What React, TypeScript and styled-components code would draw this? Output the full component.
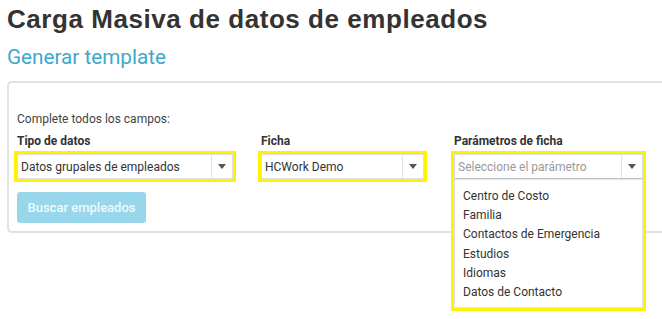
import React from "react";
import styled, { createGlobalStyle } from "styled-components";

const GlobalStyle = createGlobalStyle`
  html, body { margin: 0; padding: 0; background: #fff; }
  body { font-family: Roboto, "Noto Sans", Arial, sans-serif; color: #333; }
`;

const Page = styled.div`
  min-height: 100vh;
  box-sizing: border-box;
  padding-left: 7px;
`;

const Title = styled.h1`
  margin: 3px 0 0;
  font-family: "Liberation Sans", Arial, sans-serif;
  font-weight: 700;
  font-size: 26px;
  letter-spacing: 0.55px;
  line-height: 32px;
  color: #333;
`;

const SubTitle = styled.h2`
  margin: 10px 0 0;
  font-family: Roboto, sans-serif;
  font-weight: 400;
  font-size: 20.7px;
  line-height: 25px;
  color: #3fa7cb;
`;

const Card = styled.section`
  margin-top: 11px;
  border: 2px solid #e2e2e2;
  border-right: none;
  border-radius: 5px 0 0 5px;
  padding: 29px 0 8px 8px;
`;

const Intro = styled.p`
  margin: 0 0 8px;
  font-size: 12px;
  line-height: 14px;
  color: #444;
`;

const Row = styled.div`
  display: flex;
  align-items: flex-start;
`;

const Field = styled.div<{ $w: number; $gap: number }>`
  width: ${(p) => p.$w}px;
  margin-right: ${(p) => p.$gap}px;
  display: flex;
  flex-direction: column;
`;

const Label = styled.label`
  font-size: 12px;
  font-weight: 700;
  line-height: 14px;
  color: #333;
  margin-bottom: 3px;
`;

const Highlight = styled.div`
  position: relative;
  margin: 0 -3px;
  border: 3px solid #fff200;
  height: 25px;
`;

const Select = styled.div<{ $focused?: boolean }>`
  display: flex;
  align-items: center;
  height: 25px;
  box-sizing: border-box;
  border: 1px solid ${(p) => (p.$focused ? "#d6dde3" : "#e0e0e0")};
  border-bottom-color: ${(p) => (p.$focused ? "#b8c3cc" : "#e0e0e0")};
  background: #fff;
`;

const Value = styled.span<{ $placeholder?: boolean }>`
  flex: 1;
  padding-left: 3px;
  font-size: 12px;
  color: ${(p) => (p.$placeholder ? "#999" : "#333")};
  white-space: nowrap;
  overflow: hidden;
`;

const Caret = styled.span`
  width: 20px;
  height: 100%;
  border-left: 1px solid #e3e3e3;
  display: flex;
  align-items: center;
  justify-content: center;
  &::after {
    content: "";
    border-left: 4px solid transparent;
    border-right: 4px solid transparent;
    border-top: 5px solid #555;
  }
`;

const Menu = styled.ul`
  position: absolute;
  left: -3px;
  right: -3px;
  top: 25px;
  margin: 0;
  padding: 8px 0 6px;
  list-style: none;
  background: #fff;
  border: 3px solid #fff200;
  border-top: none;
  box-shadow: inset 0 0 0 1px #e4e4e4;
  z-index: 5;
`;

const Item = styled.li`
  padding-left: 9px;
  font-size: 12px;
  line-height: 19.2px;
  color: #333;
`;

const Button = styled.button`
  margin-top: 10px;
  width: 129px;
  height: 31px;
  border: none;
  border-radius: 3px;
  background: #98d7eb;
  color: #eef9fd;
  font-family: Roboto, sans-serif;
  font-size: 13px;
  font-weight: 500;
  padding: 0;
`;

const options = [
  "Centro de Costo",
  "Familia",
  "Contactos de Emergencia",
  "Estudios",
  "Idiomas",
  "Datos de Contacto",
];

export default function App() {
  return (
    <Page>
      <GlobalStyle />
      <Title>Carga Masiva de datos de empleados</Title>
      <SubTitle>Generar template</SubTitle>
      <Card>
        <Intro>Complete todos los campos:</Intro>
        <Row>
          <Field $w={216} $gap={28}>
            <Label>Tipo de datos</Label>
            <Highlight>
              <Select>
                <Value>Datos grupales de empleados</Value>
                <Caret />
              </Select>
            </Highlight>
          </Field>
          <Field $w={163} $gap={30}>
            <Label>Ficha</Label>
            <Highlight>
              <Select>
                <Value>HCWork Demo</Value>
                <Caret />
              </Select>
            </Highlight>
          </Field>
          <Field $w={189} $gap={0}>
            <Label>Parámetros de ficha</Label>
            <Highlight>
              <Select $focused>
                <Value $placeholder>Seleccione el parámetro</Value>
                <Caret />
              </Select>
              <Menu>
                {options.map((o) => (
                  <Item key={o}>{o}</Item>
                ))}
              </Menu>
            </Highlight>
          </Field>
        </Row>
        <Button>Buscar empleados</Button>
      </Card>
    </Page>
  );
}
